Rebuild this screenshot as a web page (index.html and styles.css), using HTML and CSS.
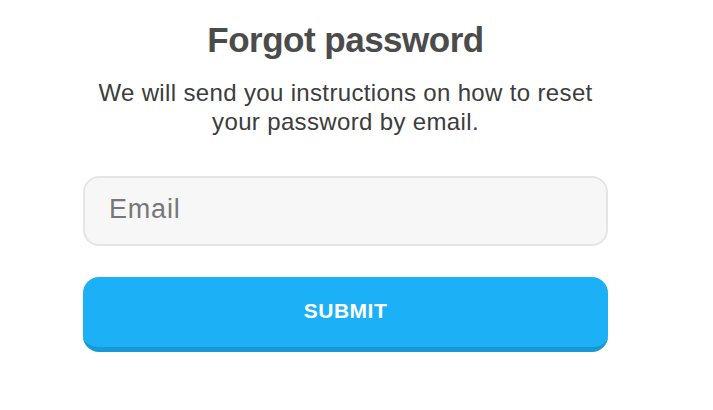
FILE: index.html
```html
<!DOCTYPE html>
<html lang="en">
<head>
    <meta charset="UTF-8">
    <meta name="viewport" content="width=device-width, initial-scale=1.0">
    <title>Forgot password</title>
    <link rel="stylesheet" href="styles.css">
</head>
<body>
    <div class="page">
        <form class="reset-form" onsubmit="return false;">
            <h1>Forgot password</h1>
            <p class="intro">We will send you instructions on how to reset your password by email.</p>
            <input type="email" class="email-input" placeholder="Email">
            <button type="submit" class="submit-btn">Submit</button>
        </form>
    </div>
</body>
</html>
```

FILE: styles.css
```css
body {
    margin: 0;
    padding: 0;
    background-color: #fff;
    font-family: "Liberation Sans", Arial, sans-serif;
}

.page {
    display: flex;
    justify-content: center;
    padding-right: 22px;
}

.reset-form {
    width: 525px;
    display: flex;
    flex-direction: column;
    align-items: center;
    padding-top: 19px;
}

h1 {
    margin: 0;
    font-size: 35px;
    font-weight: bold;
    letter-spacing: -0.5px;
    color: #4b4b4b;
    line-height: 42px;
}

.intro {
    margin: 17px 0 0;
    width: 515px;
    font-size: 24px;
    letter-spacing: 0.35px;
    line-height: 29px;
    color: #3c3c3c;
    text-align: center;
}

.email-input {
    box-sizing: border-box;
    width: 100%;
    height: 70px;
    margin-top: 40px;
    padding: 0 24px 4px;
    border: 2px solid #e5e5e5;
    border-radius: 16px;
    background-color: #f7f7f7;
    font-family: inherit;
    font-size: 27px;
    letter-spacing: 0.8px;
    color: #3c3c3c;
    outline: none;
}

.email-input::placeholder {
    color: #777;
}

.submit-btn {
    box-sizing: border-box;
    width: 100%;
    height: 75px;
    margin-top: 31px;
    padding-bottom: 4px;
    border: none;
    border-bottom: 5px solid #1899d6;
    border-radius: 16px;
    background-color: #1cb0f6;
    color: #fff;
    font-family: inherit;
    font-size: 21px;
    font-weight: bold;
    letter-spacing: 0.5px;
    text-transform: uppercase;
    cursor: pointer;
}
```
